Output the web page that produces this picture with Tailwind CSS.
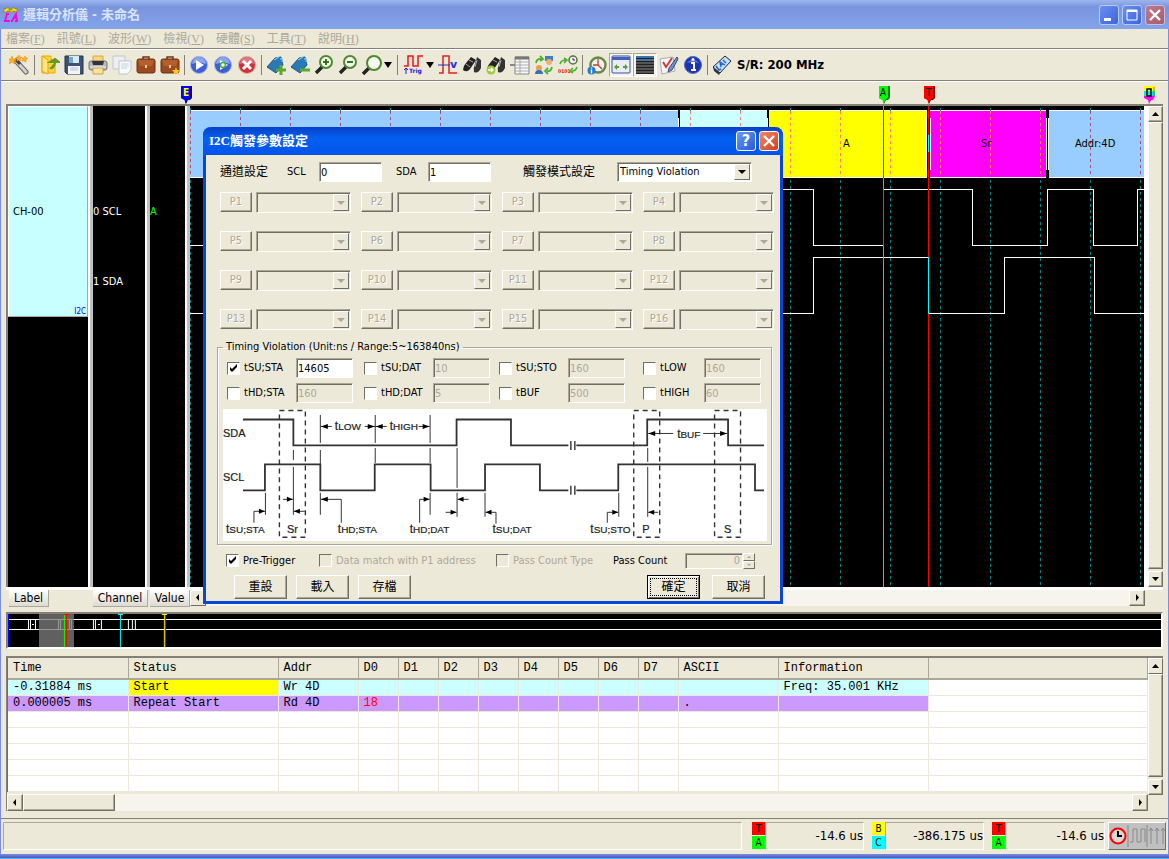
<!DOCTYPE html>
<html lang="zh-Hant">
<head>
<meta charset="utf-8">
<title>邏輯分析儀 - 未命名</title>
<script src="https://cdn.jsdelivr.net/npm/@tailwindcss/browser@4"></script>
</head>
<body class="relative flex min-h-screen flex-col overflow-x-hidden bg-[#ece9d8] font-['DejaVu_Sans_Condensed','Noto_Sans_CJK_TC',sans-serif] text-[11px] leading-4 text-black">

<!-- Window title bar -->
<header class="flex h-[29px] shrink-0 items-center bg-linear-to-b from-[#9db5ee] via-[#7a94de] via-25% to-[#82a4ea] pl-[3px] pr-1">
  <svg class="h-4 w-4 shrink-0" viewBox="0 0 16 16"><path d="M1 5V2h2V1h3v2h3V1h3v1h2v3h-2V4h-2v1H7V4H4v1z" fill="#ffe600" stroke="#8a7a00" stroke-width=".6"/><path d="M1 14h6M2 14l2-7M3 7h3M8 14h2M12 14h3M9 14l4-7 1 7M10 11h4" stroke="#ff00e0" stroke-width="1.8" fill="none"/></svg>
  <h1 class="ml-1 flex-1 text-[13px] font-bold text-[#d8e4f8]">邏輯分析儀 - 未命名</h1>
  <div class="flex gap-[3px]">
    <button aria-label="最小化" class="h-5 w-5 rounded-[3px] border border-[#b8ccf8] bg-linear-to-br from-[#6a8ff0] to-[#3c64dc]"><svg viewBox="0 0 18 18"><path d="M4 12h7v3H4z" fill="#fff"/></svg></button>
    <button aria-label="最大化" class="h-5 w-5 rounded-[3px] border border-[#b8ccf8] bg-linear-to-br from-[#6a8ff0] to-[#3c64dc]"><svg viewBox="0 0 18 18"><path d="M4 4h10v10H4z" fill="none" stroke="#fff"/><path d="M4 5h10" stroke="#fff" stroke-width="2"/></svg></button>
    <button aria-label="關閉" class="h-5 w-5 rounded-[3px] border border-[#c8bcdc] bg-linear-to-br from-[#bc7c90] to-[#a85a68]"><svg viewBox="0 0 18 18"><path d="M4 4l10 10M14 4L4 14" stroke="#fff" stroke-width="2.4"/></svg></button>
  </div>
</header>

<div class="flex flex-1 flex-col border-x border-[#7b8ee0]">

<!-- Menu -->
<nav class="flex h-5 shrink-0 items-center gap-3 border-b border-[#848078] pl-[5px] font-['Liberation_Serif','Noto_Sans_CJK_TC',serif] text-xs text-[#aca899]">
  <a href="#">檔案(<u>F</u>)</a><a href="#">訊號(<u>L</u>)</a><a href="#">波形(<u>W</u>)</a><a href="#">檢視(<u>V</u>)</a><a href="#">硬體(<u>S</u>)</a><a href="#">工具(<u>T</u>)</a><a href="#">說明(<u>H</u>)</a>
</nav>

<!-- Toolbar -->
<div role="toolbar" class="flex h-8 shrink-0 items-center border-b border-t border-b-[#848078] border-t-white pl-[6px] [&>button]:flex [&>button]:h-6 [&>button]:w-6 [&>button]:shrink-0 [&>button]:items-center [&>button]:justify-center [&_svg]:h-5 [&_svg]:w-5">
  <button aria-label="精靈"><svg viewBox="0 0 20 20"><path d="M7 6l10 11" stroke="#666" stroke-width="5" stroke-linecap="round"/><path d="M7 6l10 11" stroke="#d0d0d0" stroke-width="3" stroke-linecap="round"/><path d="M7 5l4 4" stroke="#444" stroke-width="3"/><path d="M3 1l1 3 3 0-2 2 1 3-3-2-3 2 1-3-1-2 2 0zM10 0l1 2 2 0-2 2 1 2-2-1-2 1 0-2-1-2 2 0zM16 1l1 2 2 0-2 2 0 2-2-1-2 0 1-2-1-1 2 0z" fill="#ffb020" stroke="#e88a00" stroke-width=".5"/></svg></button>
  <i class="mx-[3px] h-5 w-px bg-[#848078]"></i>
  <button aria-label="開啟"><svg viewBox="0 0 20 20"><path d="M2 1h9v4h4v13H2z" fill="#fcd34a" stroke="#eea800"/><path d="M2 1l6 4v14l-6-3z" fill="#ffe680" stroke="#eea800"/><path d="M10 13c2 1 5-1 5-6M10 7h9l-4-3z" stroke="#669a20" stroke-width="2" fill="#669a20"/></svg></button>
  <button aria-label="儲存"><svg viewBox="0 0 20 20"><path d="M1 1h18v18H3l-2-2z" fill="#3d5478" stroke="#22344e"/><path d="M5 1h10v7H5z" fill="#d7ecfa"/><path d="M5 2h4v6H5z" fill="#7aa6d0"/><path d="M4 11h12v8H4z" fill="#f3f5f8"/><path d="M6 13h8M6 15h8" stroke="#b9c4d2"/></svg></button>
  <button aria-label="列印"><svg viewBox="0 0 20 20"><path d="M5 1h10v6H5z" fill="#f7d680" stroke="#d9a840"/><rect x="1" y="6" width="18" height="9" rx="2" fill="#b8babd" stroke="#777"/><path d="M4 6h12l-1 4H5z" fill="#333"/><path d="M5 13h10v6H5z" fill="#fbe29a" stroke="#caa04a"/><path d="M2 12h16" stroke="#eee"/></svg></button>
  <button aria-label="複製"><svg viewBox="0 0 20 20"><path d="M1 1h12v13H1z" fill="#eceef2" stroke="#c3c6cc"/><path d="M7 6h12v9l-4 4H7z" fill="#f8f9fc" stroke="#c0c4cc"/><path d="M9 9h8M9 11h8M9 13h6" stroke="#ccd0d8"/></svg></button>
  <button aria-label="專案"><svg viewBox="0 0 20 20"><path d="M7 5V2h6v3" fill="none" stroke="#6b3418" stroke-width="1.5"/><rect x="1" y="4" width="18" height="14" rx="2" fill="#9c4a20" stroke="#70300f"/><path d="M2 5h16l-2 6H4z" fill="#b3602e"/><path d="M9 10h2v3H9z" fill="#e8c890"/></svg></button>
  <button aria-label="新專案"><svg viewBox="0 0 20 20"><path d="M7 5V2h6v3" fill="none" stroke="#6b3418" stroke-width="1.5"/><rect x="1" y="4" width="18" height="14" rx="2" fill="#9c4a20" stroke="#70300f"/><path d="M2 5h16l-2 6H4z" fill="#b3602e"/><path d="M9 10h2v3H9z" fill="#e8c890"/><path d="M16 12l1 3h3l-2 2 1 3-3-2-3 2 1-3-2-2h3z" fill="#ffc820"/></svg></button>
  <i class="mx-[2px] h-5 w-px bg-[#848078]"></i>
  <button aria-label="執行"><svg viewBox="0 0 20 20"><circle cx="10" cy="10" r="8.5" fill="#3c5fd8" stroke="#a8b4e4"/><path d="M3 9a7 7 0 0114 0q-7-3-14 0z" fill="#8aa4f0"/><path d="M7 5l8 5-8 5z" fill="#fff"/></svg></button>
  <button aria-label="重複執行"><svg viewBox="0 0 20 20"><circle cx="10" cy="10" r="8.5" fill="#3c5fd8" stroke="#a8b4e4"/><path d="M3 9a7 7 0 0114 0q-7-3-14 0z" fill="#8aa4f0"/><path d="M7 5l8 5-8 5z" fill="#fff"/><circle cx="10" cy="10" r="2.5" fill="none" stroke="#3fae3a" stroke-width="1.5"/></svg></button>
  <button aria-label="停止"><svg viewBox="0 0 20 20"><circle cx="10" cy="10" r="8.5" fill="#d03038" stroke="#e0b0b4"/><path d="M3 9a7 7 0 0114 0q-7-3-14 0z" fill="#e07880"/><path d="M6 6l8 8M14 6l-8 8" stroke="#fff" stroke-width="3"/></svg></button>
  <i class="mx-[2px] h-5 w-px bg-[#848078]"></i>
  <button aria-label="增加標籤"><svg viewBox="0 0 20 20"><path d="M1 12L9 3l6-1 2 8-7 8z" fill="#2a78b4" stroke="#185a90"/><path d="M8 5l5-3M14 4q3-1 2 3" stroke="#7cc0ea" stroke-width="1.4" fill="none"/><path d="M15 10v10M10 15h10" stroke="#5fa62c" stroke-width="3"/></svg></button>
  <button aria-label="移除標籤"><svg viewBox="0 0 20 20"><path d="M1 12L9 3l6-1 2 8-7 8z" fill="#2a78b4" stroke="#185a90"/><path d="M8 5l5-3M14 4q3-1 2 3" stroke="#7cc0ea" stroke-width="1.4" fill="none"/><path d="M10 15h10" stroke="#5fa62c" stroke-width="3"/></svg></button>
  <button aria-label="放大"><svg viewBox="0 0 20 20"><path d="M2 18l6-6" stroke="#222" stroke-width="3.4"/><circle cx="12" cy="7" r="6" fill="#f4f8ee" stroke="#4c8a2c" stroke-width="2"/><path d="M9 7h6M12 4v6" stroke="#357020" stroke-width="2"/></svg></button>
  <button aria-label="縮小"><svg viewBox="0 0 20 20"><path d="M2 18l6-6" stroke="#222" stroke-width="3.4"/><circle cx="12" cy="7" r="6" fill="#f4f8ee" stroke="#4c8a2c" stroke-width="2"/><path d="M9 7h6" stroke="#357020" stroke-width="2"/></svg></button>
  <button aria-label="縮放"><svg viewBox="0 0 20 20"><path d="M1 19l6-6" stroke="#222" stroke-width="3.4"/><circle cx="12" cy="8" r="7" fill="#f4f8ee" stroke="#4c8a2c" stroke-width="2"/></svg></button>
  <span class="flex w-2 items-center"><svg class="shrink-0" viewBox="0 0 20 20"><path d="M0 7h8l-4 6z"/></svg></span>
  <i class="ml-[5px] mr-1 h-5 w-px bg-[#848078]"></i>
  <button aria-label="觸發"><svg viewBox="0 0 20 20"><path d="M0 11h4V1h5v10h5V1h5" fill="none" stroke="#e81818" stroke-width="1.5"/><path d="M2 19v-6M0 15l2-2 2 2" stroke="#2020c0" fill="none"/><text x="5" y="18" font-size="6" font-weight="bold" fill="#2020e0" font-family="DejaVu Sans">Trig</text></svg></button>
  <span class="flex w-[10px] items-center"><svg class="shrink-0" viewBox="0 0 20 20"><path d="M0 7h8l-4 6z"/></svg></span>
  <button aria-label="觸發電壓"><svg viewBox="0 0 20 20"><path d="M1 18h4V1h6v17h8" fill="none" stroke="#e02020" stroke-width="1.5"/><path d="M0 10h12" stroke="#2030c0"/><text x="12" y="13" font-size="11" font-weight="bold" fill="#2030e0" font-family="DejaVu Sans">v</text></svg></button>
  <button aria-label="搜尋"><svg viewBox="0 0 20 20"><path d="M9 2l5 3-6 9q-3 4-7 1 0-4 3-7z" fill="#222"/><path d="M15 2l4 3 0 8q-3 6-7 4-1-4 1-8z" fill="#333"/><path d="M7 5l4 2M4 9l4 3M15 5l-2 7" stroke="#aaa"/></svg></button>
  <button aria-label="找下一個"><svg viewBox="0 0 20 20"><path d="M9 2l5 3-6 9q-3 4-7 1 0-4 3-7z" fill="#222"/><path d="M15 2l4 3 0 8q-3 6-7 4-1-4 1-8z" fill="#333"/><path d="M7 5l4 2M15 5l-2 7" stroke="#aaa"/><circle cx="5" cy="15" r="4.5" fill="#a4c83c"/><path d="M2 15h5M5 13l2 2-2 2" stroke="#fff" fill="none" stroke-width="1.3"/></svg></button>
  <button aria-label="清單"><svg viewBox="0 0 20 20"><path d="M5 2h14v17H5z" fill="#f8f8f8" stroke="#888"/><path d="M5 3h14" stroke="#777" stroke-width="3"/><path d="M5 7h14M5 10h14M5 13h14M5 16h14M10 3v16" stroke="#999" stroke-width=".8"/><path d="M0 10h5" stroke="#888" stroke-width="2"/></svg></button>
  <button aria-label="交換"><svg viewBox="0 0 20 20"><path d="M11 1h8v5h-8z" fill="#4080c8"/><circle cx="15" cy="7" r="3" fill="#f0b070"/><circle cx="5" cy="13" r="3" fill="#e8a050"/><path d="M1 19q0-4 4-4t4 4z" fill="#3870c0"/><path d="M2 8q1-5 5-4M6 1l3 3-3 2M18 12q-1 5-5 4M14 13l-3 3 3 3" stroke="#4cb030" stroke-width="1.8" fill="none"/></svg></button>
  <button aria-label="編碼"><svg viewBox="0 0 20 20"><circle cx="15" cy="5" r="4" fill="#eee" stroke="#577044" stroke-width="1.5"/><path d="M15 3v2h2" stroke="#333" fill="none"/><path d="M2 9q1-4 6-4M6 3l3 2-3 3M19 12q-1 4-5 4M15 13l-3 3 3 2" stroke="#4cb030" stroke-width="1.6" fill="none"/><text x="0" y="18" font-size="5" font-weight="bold" fill="#e02020" font-family="DejaVu Sans Condensed">0101</text></svg></button>
  <i class="mx-[2px] h-5 w-px bg-[#848078]"></i>
  <button aria-label="取樣"><svg viewBox="0 0 20 20"><circle cx="11" cy="10" r="7.5" fill="#f2f2ee" stroke="#648848" stroke-width="2.4"/><path d="M11 4v6l4 4M11 10H6" stroke="#c04030" stroke-width="1.3" fill="none"/><circle cx="4.5" cy="15.5" r="4" fill="#2a7cc8"/><path d="M4.5 12.5v1M4.5 14.5v4" stroke="#fff" stroke-width="1.4"/></svg></button>
  <button aria-label="視窗" class="border border-b-white border-l-[#aca899] border-r-white border-t-[#aca899] bg-[#f5f3ea]"><svg viewBox="0 0 20 20"><rect x="1" y="1" width="18" height="17" rx="1" fill="#e8edf8" stroke="#3c50a0"/><path d="M1 2h18v3H1z" fill="#4560c0"/><path d="M3 12l3-3v2h2v2H6v2zM17 12l-3-3v2h-2v2h2v2z" fill="#58a02c"/></svg></button>
  <button aria-label="波形列" class="border border-b-white border-l-[#aca899] border-r-white border-t-[#aca899] bg-[#f5f3ea]"><svg viewBox="0 0 20 20"><path d="M1 1h18v18H1z" fill="#222"/><path d="M1 2h18M1 5h18" stroke="#4a90d8" stroke-width="1.6"/><path d="M1 8h18M1 11h18M1 14h18M1 17h18" stroke="#888"/></svg></button>
  <button aria-label="檢查"><svg viewBox="0 0 20 20"><path d="M1 4l13-2 2 14-13 3z" fill="#f4f6fa" stroke="#aab"/><path d="M4 7l3 5 6-9" stroke="#d83838" stroke-width="2" fill="none"/><path d="M18 2l-8 11-1 4 4-2 6-11z" fill="#6898cc" stroke="#446"/></svg></button>
  <button aria-label="資訊"><svg viewBox="0 0 20 20"><circle cx="10" cy="10" r="8.5" fill="#1c34b4" stroke="#5068c8"/><path d="M4 8a7 6 0 0112 0q-6-2-12 0z" fill="#5c78e0"/><path d="M8 8h3v7M8 15h5" stroke="#fff" stroke-width="2" fill="none"/><circle cx="10" cy="4.5" r="1.5" fill="#fff"/></svg></button>
  <i class="mx-[2px] h-5 w-px bg-[#848078]"></i>
  <button aria-label="LA"><svg viewBox="0 0 20 20"><path d="M1 12L13 1l6 5L8 18z" fill="#bfe0f8" stroke="#223"/><path d="M1 12l1 4 5 4 1-2z" fill="#334"/><path d="M4 11l3 4 2-1M9 12l-1-5 5 3M8 10l3-1M11 5l3 3" fill="none" stroke="#2060d0" stroke-width="1.4"/></svg></button>
  <b class="ml-[3px] text-[13px]">S/R: 200 MHz</b>
</div>

<!-- Marker ruler -->
<div class="relative h-[23px] shrink-0 border-t border-white">
  <svg class="absolute left-[179px] top-1 h-[18px] w-3" viewBox="0 0 12 18"><path d="M1 0h11v12l-2 2H8l-2 4-1-4-4-2z" fill="#000080"/><path d="M1 0h9v12l-3 2-1.5 4-1-4L1 12z" fill="#0000ff"/><text x="3" y="10" font-size="10" font-weight="bold" fill="#ff0" font-family="DejaVu Sans Condensed">E</text></svg>
  <svg class="absolute left-[877px] top-1 h-[18px] w-3" viewBox="0 0 12 18"><path d="M1 0h11v12l-2 2H8l-2 4-1-4-4-2z" fill="#008000"/><path d="M1 0h9v12l-3 2-1.5 4-1-4L1 12z" fill="#00ff00"/><text x="2" y="10" font-size="10" font-family="DejaVu Sans Condensed">A</text></svg>
  <svg class="absolute left-[922px] top-1 h-[18px] w-3" viewBox="0 0 12 18"><path d="M1 0h11v12l-2 2H8l-2 4-1-4-4-2z" fill="#800000"/><path d="M1 0h9v12l-3 2-1.5 4-1-4L1 12z" fill="#ff0000"/><text x="3" y="10" font-size="10" font-family="DejaVu Sans Condensed">T</text></svg>
  <svg class="absolute left-[1142px] top-1 h-[18px] w-3" viewBox="0 0 12 18"><path d="M1 0h11v5H1z" fill="#ff0"/><path d="M1 5h11v5H1z" fill="#00e8e8"/><path d="M1 10h11l-2 4H8l-2 4-1-4-4-2z" fill="#f0f"/><path d="M11 1v9" stroke="#808000" stroke-width="1"/><path d="M4 3h4v7H4z" fill="none" stroke="#000" stroke-width="1.5"/></svg>
</div>

<!-- Signal panel -->
<main class="mx-[5px] flex flex-1 flex-col border-t-2 border-[#848078]">
  <div class="flex flex-1">
    <div class="flex min-w-0 flex-1 border-l-2 border-[#848078] bg-black">
      <div class="w-20 shrink-0">
        <div class="relative flex h-[211px] items-center border border-b-[#aca899] border-l-white border-r-[#aca899] border-t-white bg-[#c8ffff] pl-1">CH-00<small class="absolute bottom-0 right-px text-[8px] leading-2 text-[#0000ff]">I2C</small></div>
      </div>
      <i class="w-[5px] shrink-0 border-l-2 border-l-white bg-[#c0c0c0]"></i>
      <div class="w-13 shrink-0 text-white"><p class="mt-[98px]">0 SCL</p><p class="mt-[54px]">1 SDA</p></div>
      <i class="w-[5px] shrink-0 border-l-2 border-l-white bg-[#c0c0c0]"></i>
      <div class="w-[35px] shrink-0 text-[#00ff00]"><p class="mt-[98px]">A</p></div>
      <i class="w-[5px] shrink-0 border-l-2 border-l-white bg-[#c0c0c0]"></i>
      <div class="relative min-w-0 flex-1 overflow-hidden">
        <svg class="absolute left-0 top-0 h-[482px] w-[954px]" viewBox="190 106 954 482" shape-rendering="crispEdges">
          <path d="M190 110h488v68H190zM1049 110h95v68h-95z" fill="#99ccff"/><path d="M680 110h87v68h-87z" fill="#ccffff"/><path d="M769 110h158v68H769z" fill="#ffff00"/><path d="M930 110h116v68H930z" fill="#ff00ff"/>
          <path d="M190 110.500h488M680 110.500h87M769 110.500h158M930 110.500h116M1049 110.500h95M190 177.500h488M680 177.500h87M769 177.500h158M930 177.500h116M1049 177.500h95" stroke="#fff"/>
          <path d="M678.500 118v52M767.500 118v52M926.500 118v52M930.500 118v52M1046.500 118v52M1048.500 118v52" stroke="#fff"/>
          <g stroke="#008080" stroke-dasharray="3 3" fill="none"><path d="M190.500 108v480M240.500 108v480M290.500 108v480M340.500 108v480M390.500 108v480M440.500 108v480M490.500 108v480M540.500 108v480M590.500 108v480M640.500 108v480M690.500 108v480M740.500 108v480M790.500 108v480M840.500 108v480M890.500 108v480M940.500 108v480M990.500 108v480M1040.500 108v480M1090.500 108v480M1140.500 108v480"/></g>
          <g stroke-dasharray="3 3" fill="none"><path stroke="#a8507c" d="M190.500 111v66M240.500 111v66M290.500 111v66M340.500 111v66M390.500 111v66M440.500 111v66M490.500 111v66M540.500 111v66M590.500 111v66M640.500 111v66M1090.500 111v66M1140.500 111v66"/><path stroke="#99ccff" stroke-dashoffset="3" d="M190.500 111v66M240.500 111v66M290.500 111v66M340.500 111v66M390.500 111v66M440.500 111v66M490.500 111v66M540.500 111v66M590.500 111v66M640.500 111v66M1090.500 111v66M1140.500 111v66"/><path stroke="#ff8080" d="M690.500 111v66M740.500 111v66M790.500 111v66M840.500 111v66M890.500 111v66"/><path stroke="#ccffff" stroke-dashoffset="3" d="M690.500 111v66M740.500 111v66"/><path stroke="#ffff00" stroke-dashoffset="3" d="M790.500 111v66M840.500 111v66M890.500 111v66"/><path stroke="#ff9040" d="M940.500 111v66M990.500 111v66M1040.500 111v66"/><path stroke="#ff00ff" stroke-dashoffset="3" d="M940.500 111v66M990.500 111v66M1040.500 111v66"/></g>
          <path fill="none" stroke="#fff" d="M190 245.500h20M190 313.500h20M760 189.500h53.500v56h70M883 189.500h89.500v56h75v-56h46v56h44v-56h7M760 313.500h53.500v-56H928M928 313.500h76.500v-56h90v56h50"/>
          <path d="M883.500 106v482" stroke="#0f0"/><path d="M883.500 110v68" stroke="#f00"/><path d="M883.500 189v57" stroke="#f0f"/>
          <path d="M928.500 106v482" stroke="#f00"/><path d="M928.500 135v17M928.500 257v57" stroke="#0ff"/>
          <g font-family="DejaVu Sans Condensed" font-size="11"><text x="843" y="147">A</text><text x="981" y="147">Sr</text><text x="1075" y="147">Addr:4D</text></g>
        </svg>
      </div>
      <i class="w-1 shrink-0 bg-white"></i>
    </div>
    <div class="flex w-[15px] shrink-0 flex-col">
      <button aria-label="向上" class="flex h-4 shrink-0 items-center justify-center border border-b-[#716f64] border-l-white border-r-[#716f64] border-t-white shadow-[inset_-1px_-1px_#aca899]"><svg class="h-2 w-2" viewBox="0 0 8 8"><path d="M0 6h7L3.500 2z"/></svg></button>
      <div class="flex-1 border border-b-[#716f64] border-l-white border-r-[#716f64] border-t-white shadow-[inset_-1px_-1px_#aca899]"></div>
      <button aria-label="向下" class="mt-[2px] flex h-4 shrink-0 items-center justify-center border border-b-[#716f64] border-l-white border-r-[#716f64] border-t-white shadow-[inset_-1px_-1px_#aca899]"><svg class="h-2 w-2" viewBox="0 0 8 8"><path d="M0 2h7L3.500 6z"/></svg></button>
    </div>
  </div>
  <div class="flex h-5 shrink-0 items-start border-t-3 border-white pl-[3px] pr-[18px] text-xs">
    <button class="h-[17px] w-10 border-b border-r border-[#aca899] bg-linear-to-b from-white to-[#dcdad4]">Label</button>
    <button class="ml-11 h-[17px] w-[55px] border-b border-r border-[#aca899] bg-linear-to-b from-white to-[#dcdad4]">Channel</button>
    <button class="ml-[2px] h-[17px] w-10 border-b border-r border-[#aca899] bg-linear-to-b from-white to-[#dcdad4]">Value</button>
    <button aria-label="向左" class="flex h-4 w-4 items-center justify-center border border-b-[#716f64] border-l-white border-r-[#716f64] border-t-white"><svg class="h-2 w-2" viewBox="0 0 8 8"><path d="M5 0v7L2 3.500z"/></svg></button>
    <div class="h-4 flex-1 bg-[#f6f4ec]"></div>
    <button aria-label="向右" class="flex h-4 w-4 items-center justify-center border border-b-[#716f64] border-l-white border-r-[#716f64] border-t-white shadow-[inset_-1px_-1px_#aca899]"><svg class="h-2 w-2" viewBox="0 0 8 8"><path d="M3 0v7l3-3.500z"/></svg></button>
  </div>
</main>

<!-- Capture overview -->
<div class="mx-[5px] mt-[5px] h-[37px] shrink-0 overflow-hidden border-2 border-b-white border-l-[#848078] border-r-white border-t-[#848078] bg-black">
  <svg class="block h-[33px] w-full" preserveAspectRatio="none" viewBox="8 614 1154 33" shape-rendering="crispEdges">
    <path d="M39 614h35v33H39z" fill="#606060"/><path d="M8 619.500h31M74 619.500h1090M8 629.500h31M74 629.500h1090" stroke="#fff"/><path d="M39 619.500h35M39 629.500h35" stroke="#999"/>
    <path d="M28.500 619v10M30.500 619v10M35.500 619v10M93.500 619v10M95.500 619v10M101.500 619v10M98 624.500h2M32 624.500h2M128.500 619v10M132.500 619v10M135.500 619v10M132 619.500h3" stroke="#fff"/><path d="M58.500 619v10M60.500 619v10M69.500 619v10M71.500 619v10" stroke="#999"/>
    <path d="M8.500 614v33" stroke="#00f" stroke-width="2"/><path d="M64.500 614v33" stroke="#0f0"/><path d="M66.500 614v33M64 614.500h5" stroke="#f00"/><path d="M120.500 614v33M118 614.500h5" stroke="#0ff"/><path d="M164.500 614v33M162 614.500h5" stroke="#ff0"/><path d="M165.500 615v32" stroke="#c0c"/>
  </svg>
</div>

<!-- Decoded packet list -->
<section class="mx-[5px] mt-[7px] flex shrink-0 border-l border-t-2 border-[#848078]">
  <div class="min-w-0 flex-1">
    <div class="border-l border-[#716f64] bg-white">
      <table class="w-full table-fixed border-collapse font-['Liberation_Mono',monospace] text-xs leading-[15px]">
        <colgroup><col class="w-[120px]"><col class="w-[150px]"><col class="w-20"><col class="w-10"><col class="w-10"><col class="w-10"><col class="w-10"><col class="w-10"><col class="w-10"><col class="w-10"><col class="w-10"><col class="w-[100px]"><col class="w-[150px]"><col></colgroup>
        <thead><tr class="h-[21px] bg-[#ece9d8] text-left [&>th]:border-b-2 [&>th]:border-r [&>th]:border-[#aca899] [&>th]:p-0 [&>th]:pl-[5px] [&>th]:pt-px [&>th]:font-normal"><th>Time</th><th>Status</th><th>Addr</th><th>D0</th><th>D1</th><th>D2</th><th>D3</th><th>D4</th><th>D5</th><th>D6</th><th>D7</th><th>ASCII</th><th>Information</th><th></th></tr></thead>
        <tbody id="packets" class="[&_td]:h-4 [&_td]:whitespace-nowrap [&_td]:border-b [&_td]:border-r [&_td]:border-[#ece9d8] [&_td]:p-0 [&_td]:pl-[5px]"></tbody>
      </table>
    </div>
    <div class="mt-[2px] flex h-[17px] bg-[#f6f4ec]">
      <button aria-label="向左" class="flex w-4 items-center justify-center border border-b-[#716f64] border-l-white border-r-[#716f64] border-t-white bg-[#ece9d8] shadow-[inset_-1px_-1px_#aca899]"><svg class="h-2 w-2" viewBox="0 0 8 8"><path d="M5 0v7L2 3.500z"/></svg></button>
      <div class="w-[92px] border border-b-[#716f64] border-l-white border-r-[#716f64] border-t-white bg-[#ece9d8] shadow-[inset_-1px_-1px_#aca899]"></div>
      <div class="flex-1"></div>
      <button aria-label="向右" class="flex w-4 items-center justify-center border border-b-[#716f64] border-l-white border-r-[#716f64] border-t-white bg-[#ece9d8] shadow-[inset_-1px_-1px_#aca899]"><svg class="h-2 w-2" viewBox="0 0 8 8"><path d="M3 0v7l3-3.500z"/></svg></button>
    </div>
  </div>
  <div class="mb-4 flex w-[15px] shrink-0 flex-col bg-[#ece9d8]">
    <button aria-label="向上" class="flex h-4 items-center justify-center border border-b-[#716f64] border-l-white border-r-[#716f64] border-t-white"><svg class="h-2 w-2" viewBox="0 0 8 8"><path d="M0 6h7L3.500 2z"/></svg></button>
    <div class="flex-1 border border-b-[#716f64] border-l-white border-r-[#716f64] border-t-white shadow-[inset_-1px_-1px_#aca899]"></div>
    <button aria-label="向下" class="mt-[2px] flex h-4 items-center justify-center border border-b-[#716f64] border-l-white border-r-[#716f64] border-t-white shadow-[inset_-1px_-1px_#aca899]"><svg class="h-2 w-2" viewBox="0 0 8 8"><path d="M0 2h7L3.500 6z"/></svg></button>
  </div>
</section>

<!-- Status bar -->
<footer class="mt-[7px] flex h-9 shrink-0 items-start border-t border-[#848078] pl-[2px] pr-[2px] pt-[3px] text-[13px]">
  <div class="mr-[10px] h-7 flex-1 border border-b-white border-l-[#aca899] border-r-white border-t-[#aca899]"></div>
  <div class="flex w-[120px] shrink-0"><div class="flex w-[13px] flex-col gap-px text-center text-[10px] leading-[13px]"><span class="bg-[#ff0000]">T</span><span class="bg-[#00ff00]">A</span></div><output class="mr-2 h-7 flex-1 border border-b-white border-l-[#aca899] border-r-white border-t-[#aca899] text-right leading-[26px]">-14.6 us</output></div>
  <div class="flex w-[120px] shrink-0"><div class="flex w-[13px] flex-col gap-px text-center text-[10px] leading-[13px]"><span class="bg-[#ffff00]">B</span><span class="bg-[#00ffff]">C</span></div><output class="mr-2 h-7 flex-1 border border-b-white border-l-[#aca899] border-r-white border-t-[#aca899] text-right leading-[26px]">-386.175 us</output></div>
  <div class="flex w-[116px] shrink-0"><div class="flex w-[13px] flex-col gap-px text-center text-[10px] leading-[13px]"><span class="bg-[#ff0000]">T</span><span class="bg-[#00ff00]">A</span></div><output class="mr-[3px] h-7 flex-1 border border-b-white border-l-[#aca899] border-r-white border-t-[#aca899] text-right leading-[26px]">-14.6 us</output></div>
  <button aria-label="取樣模式" class="h-7 w-[58px] border border-b-[#716f64] border-l-white border-r-[#716f64] border-t-white bg-[#c0c0c0]"><svg class="h-[26px] w-14" viewBox="0 0 56 26"><circle cx="9" cy="13" r="7.5" fill="#d8d8d8" stroke="#f00" stroke-width="2"/><path d="M9 8v5h4" fill="none" stroke="#000" stroke-width="2"/><path d="M19 2v22M38 2v22" stroke="#888"/><path d="M21 19h3V6h4v13h4V6h4v13M42 21V5l-2 3M42 5l2 3M48 21V5l-2 3M48 5l2 3M54 21V5l-2 3M54 5l2 3" fill="none" stroke="#888"/></svg></button>
</footer>
</div>
<div class="h-[5px] shrink-0 border-b border-[#50b8f0] bg-linear-to-b from-[#7b8ee0] to-[#4858c0]"></div>

<!-- I2C trigger dialog -->
<div role="dialog" aria-labelledby="dialog-title" class="absolute left-[203px] top-[127px] flex w-[580px] flex-col rounded-t-lg border-x-3 border-b-3 border-[#0845d8] bg-[#ece9d8]">
  <div class="-mx-[3px] flex h-[28px] items-center gap-[3px] rounded-t-lg bg-linear-to-b from-[#0840c8] via-[#0560f0] via-40% to-[#0054e8] pl-[6px] pr-1">
    <h2 id="dialog-title" class="flex-1 font-['Liberation_Serif','Noto_Sans_CJK_TC',serif] text-[13px] font-bold text-white">I2C觸發參數設定</h2>
    <button aria-label="說明" class="h-5 w-5 rounded-[3px] border border-white bg-linear-to-br from-[#6a98f8] to-[#2858d8] text-base font-bold leading-4 text-white">?</button>
    <button aria-label="關閉對話框" class="h-5 w-5 rounded-[3px] border border-white bg-linear-to-br from-[#f08868] to-[#d03c18]"><svg viewBox="0 0 18 18"><path d="M4 4l10 10M14 4L4 14" stroke="#fff" stroke-width="2.400"/></svg></button>
  </div>
  <div class="flex items-center pl-[14px] pt-[7px] text-xs">
    <span class="w-[67px]">通道設定</span>
    <label for="scl" class="w-8 text-[11px]">SCL</label><input id="scl" value="0" class="h-5 w-[63px] border border-b-white border-l-[#aca899] border-r-white border-t-[#aca899] bg-white pl-px text-[11px] shadow-[inset_1px_1px_#716f64]">
    <label for="sda" class="ml-[14px] w-8 text-[11px]">SDA</label><input id="sda" value="1" class="h-5 w-[63px] border border-b-white border-l-[#aca899] border-r-white border-t-[#aca899] bg-white pl-px text-[11px] shadow-[inset_1px_1px_#716f64]">
    <label for="mode" class="ml-8 w-[94px]">觸發模式設定</label>
    <div class="relative w-[135px]"><select id="mode" class="block h-5 w-full appearance-none border border-b-white border-l-[#aca899] border-r-white border-t-[#aca899] bg-white pl-[2px] text-[11px] shadow-[inset_1px_1px_#716f64]"><option>Timing Violation</option></select><span class="pointer-events-none absolute bottom-[2px] right-[2px] top-[2px] flex w-4 items-center justify-center border border-b-[#716f64] border-l-white border-r-[#716f64] border-t-white bg-[#ece9d8]"><svg class="h-2 w-2" viewBox="0 0 8 8"><path d="M0 2h8L4 6z"/></svg></span></div>
  </div>
  <div id="addresses" class="grid grid-cols-4 gap-x-[10px] gap-y-[18px] pl-[14px] pr-[6px] pt-[10px]"></div>

  <fieldset class="ml-[11px] mr-2 mt-[9px] border border-[#aca899] pb-[3px] pl-[5px] pr-1 shadow-[1px_1px_#fff,inset_1px_1px_#fff]">
    <legend class="px-[3px]">Timing Violation (Unit:ns / Range:5~163840ns)</legend>
    <div id="timings" class="grid grid-cols-[137px_135px_144px_1fr] gap-y-[5px] pl-1 pt-[3px]"></div>
    <svg class="mt-[6px] block w-full bg-white" viewBox="223 409 545 132" aria-label="I2C timing diagram">
      <g fill="none" stroke="#333" stroke-width="1.800"><path d="M243 419.500h50.500v26H457v-26h54.500v26H569M577 445.500h71v-26h81v26h36"/><path d="M243 490.500h22v-26h55.500v26H375v-26h56v26h54.500v-26h55v26H569M577 490.500h42v-26h137v26h9"/></g>
      <path d="M571.500 441v9M575.500 441v9M571.500 486v9M575.500 486v9" stroke="#333" stroke-width="1.400"/>
      <g fill="none" stroke="#333"><path d="M265.500 493v22M293.500 450v10M293.500 467v48M320.500 415v28M320.500 450v15M320.500 493v22M375.500 415v28M375.500 448v15M430.500 415v28M430.500 448v15M430.500 493v22M457.500 448v40M457.500 493v24M485.500 493v24M619.500 493v24M648.500 448v14M648.500 467v50"/><path stroke-dasharray="5 4" stroke-width="1.400" d="M279.500 410.500h26v127h-26zM634.500 410.500h26v127h-26zM715.500 410.500h26v127h-26z"/>
      <path d="M321 426.500h11M365 426.500h22M419 426.500h11M649 433.500h25M704 433.500h24M254 523v-11.500h11M283 499.500h10M294 511.500h11M321 499.500h20.500V523M420 523v-23.500h10M458 499.500h11M446 512.500h11M486 512.500h10.500V524M608 523v-10.500h11M649 512.500h10"/></g>
      <path d="M321 426.500l7-2.500v5zM375 426.500l-7-2.500v5zM376 426.500l7-2.500v5zM430 426.500l-7-2.500v5zM649 433.500l7-2.500v5zM728 433.500l-7-2.500v5zM265 511.500l-6-2.500v5zM293 499.500l-6-2.500v5zM294 511.500l6-2.500v5zM321 499.500l7-2.500v5zM430 499.500l-6-2.500v5zM458 499.500l6-2.500v5zM457 512.500l-6-2.500v5zM486 512.500l6-2.500v5zM619 512.500l-6-2.500v5zM649 512.500l6-2.500v5z"/>
      <g font-family="Liberation Sans" font-size="11" fill="#222" stroke="#222" stroke-width=".2"><text x="223" y="437">SDA</text><text x="223" y="481">SCL</text><text x="287" y="533">Sr</text><text x="643" y="533">P</text><text x="725" y="533">S</text>
      <g font-size="10"><text x="335" y="430"><tspan font-size="12">t</tspan>LOW</text><text x="390" y="430"><tspan font-size="12">t</tspan>HIGH</text><text x="678" y="438"><tspan font-size="12">t</tspan>BUF</text><text x="226" y="533"><tspan font-size="12">t</tspan>SU;STA</text><text x="338" y="533"><tspan font-size="12">t</tspan>HD;STA</text><text x="410" y="533"><tspan font-size="12">t</tspan>HD;DAT</text><text x="493" y="533"><tspan font-size="12">t</tspan>SU;DAT</text><text x="591" y="533"><tspan font-size="12">t</tspan>SU;STO</text></g></g>
    </svg>
  </fieldset>

  <div class="mt-2 flex h-4 items-center pl-5">
    <label class="flex w-[93px] items-center gap-1"><input type="checkbox" checked class="peer sr-only"><svg class="h-[13px] w-[13px] border border-b-white border-l-[#716f64] border-r-white border-t-[#716f64] bg-white" viewBox="0 0 11 11"><path d="M2 4v3l2 2 5-5V1L4 6z"/></svg>Pre-Trigger</label>
    <label class="flex w-[177px] items-center gap-1 text-[#aca899]"><input type="checkbox" disabled class="h-[13px] w-[13px] appearance-none border border-b-white border-l-[#716f64] border-r-white border-t-[#716f64]">Data match with P1 address</label>
    <label class="flex w-[117px] items-center gap-1 text-[#aca899]"><input type="checkbox" disabled class="h-[13px] w-[13px] appearance-none border border-b-white border-l-[#716f64] border-r-white border-t-[#716f64]">Pass Count Type</label>
    <label for="pass" class="w-[72px]">Pass Count</label>
    <input id="pass" type="text" inputmode="numeric" value="0" disabled class="h-4 w-[58px] border border-b-white border-l-[#aca899] border-r-white border-t-[#aca899] pr-[2px] text-right text-[#aca899] shadow-[inset_1px_1px_#716f64]">
    <span class="flex w-3 flex-col"><button disabled aria-label="增加" class="flex h-2 items-center justify-center border border-b-[#716f64] border-l-white border-r-[#716f64] border-t-white"><svg class="h-1 w-1" viewBox="0 0 4 4"><path d="M0 3h4L2 1z" fill="#aca899"/></svg></button><button disabled aria-label="減少" class="flex h-2 items-center justify-center border border-b-[#716f64] border-l-white border-r-[#716f64] border-t-white"><svg class="h-1 w-1" viewBox="0 0 4 4"><path d="M0 1h4L2 3z" fill="#aca899"/></svg></button></span>
  </div>
  <div class="mt-[6px] flex gap-[9px] pb-[2px] pl-7 pr-[15px] text-xs">
    <button class="h-6 w-[53px] border border-b-[#716f64] border-l-white border-r-[#716f64] border-t-white shadow-[inset_-1px_-1px_#aca899]">重設</button>
    <button class="h-6 w-[53px] border border-b-[#716f64] border-l-white border-r-[#716f64] border-t-white shadow-[inset_-1px_-1px_#aca899]">載入</button>
    <button class="h-6 w-[53px] border border-b-[#716f64] border-l-white border-r-[#716f64] border-t-white shadow-[inset_-1px_-1px_#aca899]">存檔</button>
    <button class="ml-auto h-6 w-[53px] border border-black p-[2px] shadow-[inset_1px_1px_#fff,inset_-1px_-1px_#716f64]"><span class="block border border-dotted border-black">確定</span></button>
    <button class="ml-[3px] h-6 w-[53px] border border-b-[#716f64] border-l-white border-r-[#716f64] border-t-white shadow-[inset_-1px_-1px_#aca899]">取消</button>
  </div>
</div>

<script>
  // P1..P16 address slots, all disabled in Timing Violation mode
  document.getElementById('addresses').innerHTML = Array.from({ length: 16 }, (_, i) => `
    <div class="flex gap-1">
      <button disabled class="h-5 w-8 border border-b-[#716f64] border-l-white border-r-[#716f64] border-t-white text-[#aca899] shadow-[inset_-1px_-1px_#aca899] text-shadow-[1px_1px_#fff]">P${i + 1}</button>
      <div class="relative flex-1"><select disabled aria-label="P${i + 1}" class="block h-[21px] w-full appearance-none border border-b-white border-l-[#aca899] border-r-white border-t-[#aca899] shadow-[inset_1px_1px_#716f64]"></select><span class="pointer-events-none absolute bottom-[2px] right-[2px] top-[2px] flex w-4 items-center justify-center border border-b-[#716f64] border-l-white border-r-[#716f64] border-t-white bg-[#ece9d8]"><svg class="h-2 w-2" viewBox="0 0 8 8"><path d="M0 2h8L4 6z" fill="#aca899"/></svg></span></div>
    </div>`).join('');

  // Timing limits: [name, value, enabled]
  const limits = [['tSU;STA', 14605, 1], ['tSU;DAT', 10], ['tSU;STO', 160], ['tLOW', 160], ['tHD;STA', 160], ['tHD;DAT', 5], ['tBUF', 500], ['tHIGH', 60]];
  document.getElementById('timings').innerHTML = limits.map(([name, value, on], i) => `
    <div class="flex items-center">
      <label class="flex ${i % 4 === 3 ? 'w-[61px]' : 'w-[69px]'} items-center gap-1"><input type="checkbox" ${on ? 'checked' : ''} class="peer sr-only"><svg class="h-[13px] w-[13px] shrink-0 border border-b-white border-l-[#716f64] border-r-white border-t-[#716f64] bg-white" viewBox="0 0 11 11">${on ? '<path d="M2 4v3l2 2 5-5V1L4 6z"/>' : ''}</svg>${name}</label>
      <input aria-label="${name} ns" value="${value}" ${on ? '' : 'disabled'} class="h-5 w-[57px] border border-b-white border-l-[#aca899] border-r-white border-t-[#aca899] pl-px shadow-[inset_1px_1px_#716f64] ${on ? 'bg-white' : 'text-[#aca899]'}">
    </div>`).join('');

  // Packet rows
  const rows = [
    ['bg-[#ccffff]', ['-0.31884 ms', 'Start', 'Wr 4D', '', '', '', '', '', '', '', '', '', 'Freq: 35.001 KHz']],
    ['bg-[#cc99ff]', ['0.000005 ms', 'Repeat Start', 'Rd 4D', '18', '', '', '', '', '', '', '', '.', '']],
    ['', Array(13).fill('')], ['', Array(13).fill('')], ['', Array(13).fill('')], ['', Array(13).fill('')], ['', Array(13).fill('')]
  ];
  document.getElementById('packets').innerHTML = rows.map(([bg, cells]) =>
    `<tr>${cells.map((c, i) => `<td class="${c === 'Start' ? 'bg-[#ffff00]' : bg} ${c === '18' ? 'text-[#ff0000]' : ''}">${c}</td>`).join('')}<td></td></tr>`).join('');
</script>
</body>
</html>
